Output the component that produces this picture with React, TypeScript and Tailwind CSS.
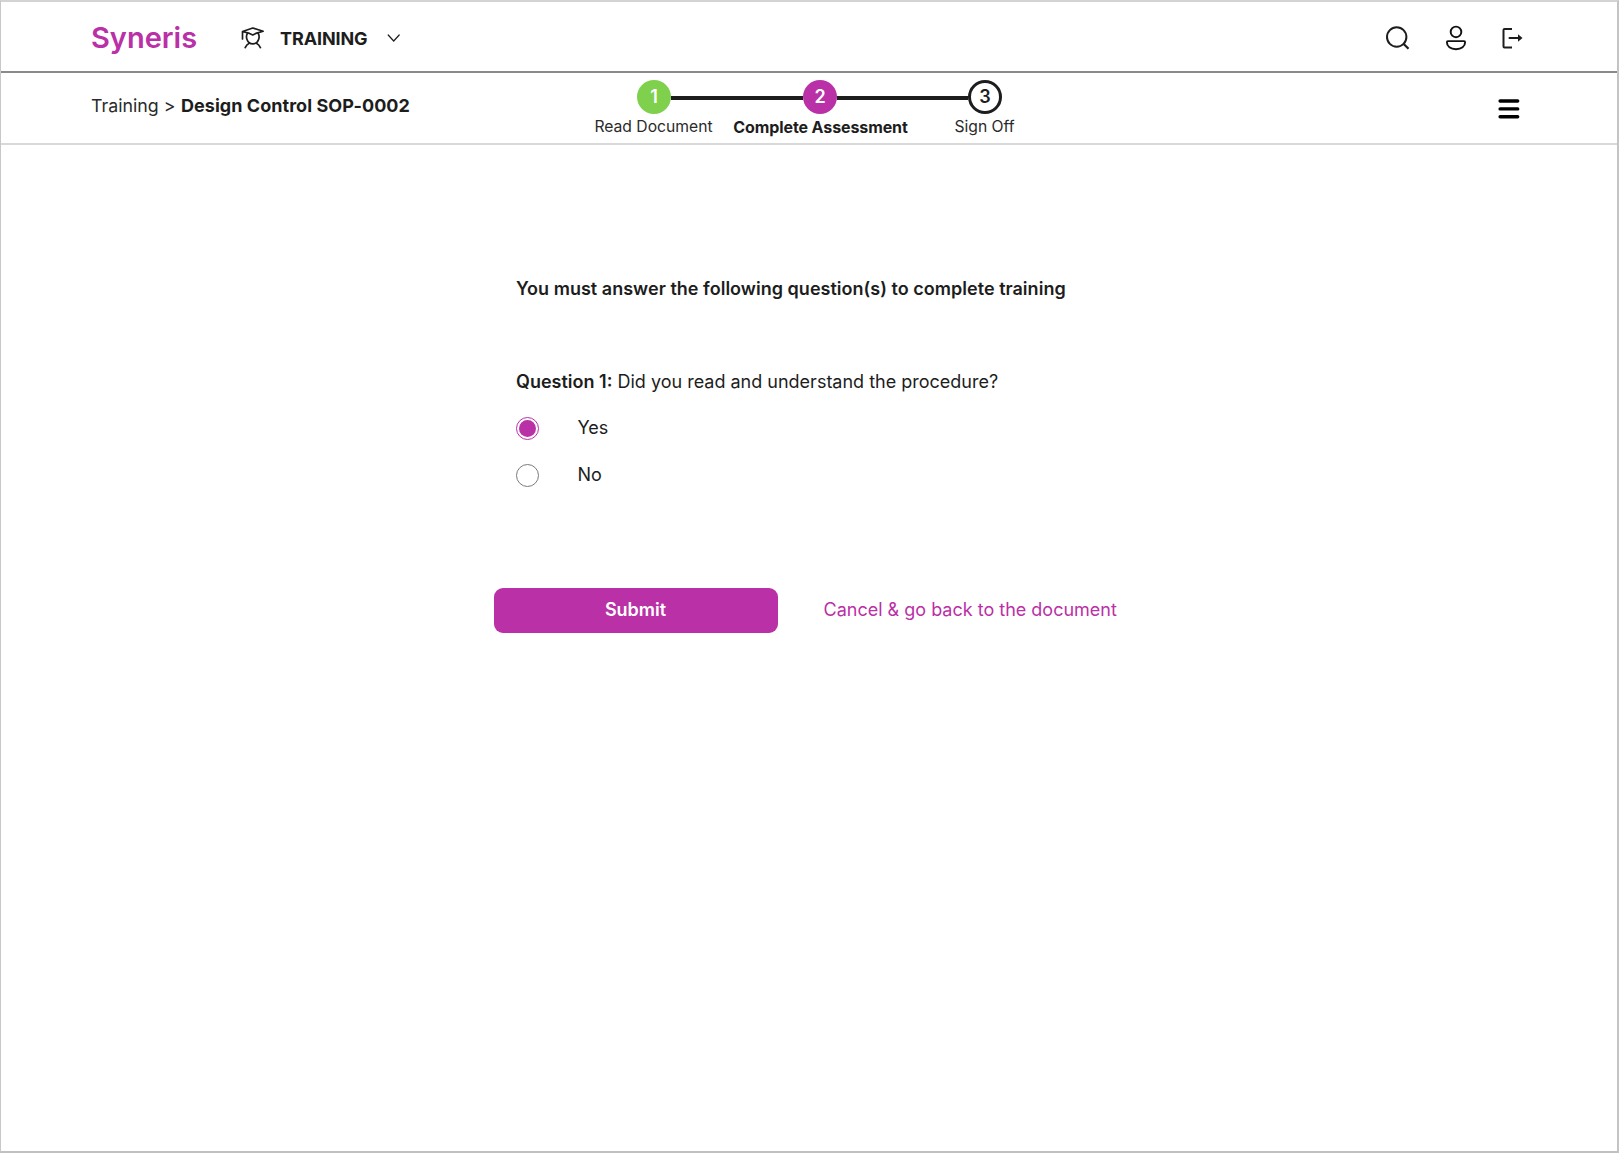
const INK = "#1d1d1d";

function GraduateIcon() {
  return (
    <svg width="24" height="24" viewBox="0 0 24 24" fill="none" stroke={INK} strokeWidth="1.7" strokeLinecap="round" strokeLinejoin="round" className="shrink-0">
      <path d="M2.500 13V5.500L12.800 2L23.200 5.300L15.800 7.400L12.800 8.900L9.500 7.400L2.500 5.500" />
      <path d="M7.400 7.500C6.400 9 6.300 11.500 7 13.500C8 16.300 10.200 17.900 12.800 17.900C15.400 17.900 17.600 16.300 18.600 13.500C19.300 11.500 19.200 9 18.200 7.500" />
      <path d="M9.200 17.300C7.500 18.200 6.100 19.700 5.200 21.600M16.400 17.300C18.100 18.200 19.500 19.700 20.400 21.600" />
    </svg>
  );
}

function Step({ n, label, tone, bold }: { n: number; label: string; tone: string; bold?: boolean }) {
  return (
    <div className="relative z-10 flex w-[34px] flex-col items-center">
      <div className={`flex size-[34px] items-center justify-center rounded-full pb-px text-[18px] font-semibold ${tone}`}>{n}</div>
      <div className={`mt-[3px] whitespace-nowrap leading-[20px] ${bold ? "pl-px text-[16px] font-bold tracking-[-0.1px]" : "pr-px text-[15.700px] text-[#2a2a2a]"}`}>{label}</div>
    </div>
  );
}

function Option({ label, checked }: { label: string; checked?: boolean }) {
  return (
    <label className="flex h-[24px] items-center gap-[39px]">
      <span className={`flex size-[23px] items-center justify-center rounded-full border ${checked ? "border-[#ba30a6]" : "border-[#7a7a7a]"}`}>
        {checked && <span className="size-[17px] rounded-full bg-[#ba30a6]" />}
      </span>
      <span className="-mt-[2px]">{label}</span>
    </label>
  );
}

export default function App() {
  return (
    <div className="flex h-[1153px] w-[1619px] flex-col border-y-2 border-r-2 border-l border-t-[#d3d3d3] border-r-[#c4c4c4] border-b-[#c0c0c0] border-l-[#c8c8c8] bg-white font-['Inter',sans-serif] text-[18px] text-[#1d1d1d]">
      <header className="flex h-[71px] shrink-0 items-center border-b-2 border-[#8a8a8a] pt-[2px] pl-[90px]">
        <div className="w-[149px] text-[29px] font-semibold leading-[36px] text-[#ba30a6]">Syneris</div>
        <GraduateIcon />
        <div className="mt-[2px] ml-[16px] w-[107px] font-bold leading-[24px] tracking-[-0.1px]">TRAINING</div>
        <svg width="14" height="14" viewBox="0 0 14 14" fill="none" stroke={INK} strokeWidth="1.2" strokeLinecap="round">
          <path d="M1.200 4L6.700 10L12.200 4" />
        </svg>
        <div className="mr-[93px] ml-auto flex items-center gap-[32px]">
          <svg width="26" height="26" viewBox="0 0 26 26" fill="none" stroke={INK} strokeWidth="2" className="-ml-[2px] mr-[2px]">
            <circle cx="12.700" cy="12" r="9.700" />
            <path d="M19.200 18.500L24.500 23.700" strokeWidth="2.300" />
          </svg>
          <svg width="24" height="26" viewBox="0 0 24 26" fill="none" stroke="#111" strokeWidth="1.900">
            <circle cx="12" cy="6.900" r="5.300" />
            <path d="M3.900 16.100H20.100Q21.100 16.100 21.100 17.200C21.100 21.300 17.500 24.200 12 24.200S2.900 21.300 2.900 17.200Q2.900 16.100 3.900 16.100Z" />
          </svg>
          <svg width="24" height="26" viewBox="0 0 24 26" fill="none" stroke={INK} strokeWidth="2">
            <path d="M12 4H4.500Q3.500 4 3.500 5V21.500Q3.500 22.500 4.500 22.500H12" />
            <path d="M8.700 13H19" />
            <path d="M18 9.300L22.500 13L18 16.700Z" fill={INK} stroke="none" />
          </svg>
        </div>
      </header>
      <section className="flex h-[72px] shrink-0 border-b-2 border-[#d9d9d9]">
        <div className="flex w-[544px] pt-[21px] pl-[90px] leading-[24px] whitespace-nowrap">
          <span className="w-[90px] text-[17.800px] text-[#2a2a2a]">Training &gt;</span>
          <span className="font-bold tracking-[0.045px]">Design Control SOP-0002</span>
        </div>
        <div className="ml-[92px] flex pt-[7px]">
          <Step n={1} label="Read Document" tone="bg-[#7ed04d] text-white" />
          <div className="mt-[16px] h-[4px] w-[132px] bg-[#1d1d1d]" />
          <Step n={2} label="Complete Assessment" tone="bg-[#ba30a6] text-white" bold />
          <div className="mt-[16px] h-[4px] w-[131px] bg-[#1d1d1d]" />
          <Step n={3} label="Sign Off" tone="border-3 border-[#1d1d1d] bg-white" />
        </div>
        <svg width="22" height="20" viewBox="0 0 22 20" stroke="#000" strokeWidth="3.400" strokeLinecap="round" className="mt-[26px] mr-[97px] ml-auto">
          <path d="M2.100 2H19.700M2.100 9.900H19.700M2.100 17.700H19.700" />
        </svg>
      </section>
      <main className="flex flex-col pt-[132px] pl-[515px]">
        <h1 className="leading-[24px] font-semibold tracking-[0.025px]">You must answer the following question(s) to complete training</h1>
        <p className="mt-[69px] leading-[24px]">
          <span className="font-semibold">Question 1:</span> Did you read and understand the procedure?
        </p>
        <div className="mt-[22px] -ml-[0.5px] flex flex-col gap-[23px]">
          <Option label="Yes" checked />
          <Option label="No" />
        </div>
        <div className="mt-[101px] -ml-[22.5px] flex items-center gap-[46px]">
          <button className="h-[45px] w-[284px] rounded-[9px] bg-[#ba30a6] pb-[3px] font-semibold text-white">Submit</button>
          <a className="-mt-[3px] text-[#ba30a6]">Cancel &amp; go back to the document</a>
        </div>
      </main>
    </div>
  );
}
